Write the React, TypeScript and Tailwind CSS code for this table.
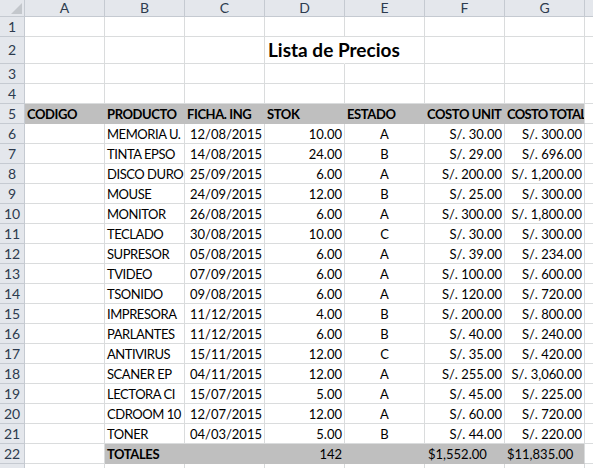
const COLS = ["A", "B", "C", "D", "E", "F", "G", ""];

const rows: [string, string, string, string, string, string][] = [
  ["MEMORIA U.", "12/08/2015", "10.00", "A", "S/. 30.00", "S/. 300.00"],
  ["TINTA EPSO", "14/08/2015", "24.00", "B", "S/. 29.00", "S/. 696.00"],
  ["DISCO DURO", "25/09/2015", "6.00", "A", "S/. 200.00", "S/. 1,200.00"],
  ["MOUSE", "24/09/2015", "12.00", "B", "S/. 25.00", "S/. 300.00"],
  ["MONITOR", "26/08/2015", "6.00", "A", "S/. 300.00", "S/. 1,800.00"],
  ["TECLADO", "30/08/2015", "10.00", "C", "S/. 30.00", "S/. 300.00"],
  ["SUPRESOR", "05/08/2015", "6.00", "A", "S/. 39.00", "S/. 234.00"],
  ["TVIDEO", "07/09/2015", "6.00", "A", "S/. 100.00", "S/. 600.00"],
  ["TSONIDO", "09/08/2015", "6.00", "A", "S/. 120.00", "S/. 720.00"],
  ["IMPRESORA", "11/12/2015", "4.00", "B", "S/. 200.00", "S/. 800.00"],
  ["PARLANTES", "11/12/2015", "6.00", "B", "S/. 40.00", "S/. 240.00"],
  ["ANTIVIRUS", "15/11/2015", "12.00", "C", "S/. 35.00", "S/. 420.00"],
  ["SCANER EP", "04/11/2015", "12.00", "A", "S/. 255.00", "S/. 3,060.00"],
  ["LECTORA CI", "15/07/2015", "5.00", "A", "S/. 45.00", "S/. 225.00"],
  ["CDROOM 10", "12/07/2015", "12.00", "A", "S/. 60.00", "S/. 720.00"],
  ["TONER", "04/03/2015", "5.00", "B", "S/. 44.00", "S/. 220.00"],
];

const grid = "grid grid-cols-[25px_repeat(8,80px)]";
const cell = "flex items-end pb-[2px] px-[2px] whitespace-nowrap overflow-hidden border-r border-b border-[#dadcdd]";
const gray = "flex items-end pb-[2px] px-[2px] whitespace-nowrap overflow-hidden border-r border-b border-[#bfbfbf] bg-[#bfbfbf] font-bold tracking-[-0.4px]";

function RowHead({ n }: { n: number | string }) {
  return (
    <div className="flex items-center justify-center border-r border-b border-[#c5cad1] bg-[#e4e7ec] text-[14px] text-[#2d3b4e]">
      {n}
    </div>
  );
}

function Blank({ n, h = "h-5" }: { n: number | string; h?: string }) {
  return (
    <div className={`${grid} ${h}`}>
      <RowHead n={n} />
      {COLS.map((c, i) => (
        <div key={i} className={cell} />
      ))}
    </div>
  );
}

export default function App() {
  return (
    <div
      className="w-[593px] h-[468px] overflow-hidden bg-white text-[13px] leading-none text-black"
      style={{ fontFamily: "Lato, 'Liberation Sans', sans-serif" }}
    >
      {/* column headers */}
      <div className={`${grid} h-[17px]`}>
        <div className="relative border-r border-b border-[#c5cad1] bg-[#e4e7ec]">
          <svg className="absolute right-[2px] bottom-[2px]" width="11" height="11" viewBox="0 0 11 11">
            <polygon points="11,0 11,11 0,11" fill="#c3c7cc" />
          </svg>
        </div>
        {COLS.map((c, i) => (
          <div
            key={i}
            className="flex items-center justify-center border-r border-b border-[#c5cad1] bg-[#e4e7ec] text-[14px] text-[#2d3b4e]"
          >
            {c}
          </div>
        ))}
      </div>

      <Blank n={1} />

      {/* title row */}
      <div className={`${grid} h-[27px]`}>
        <RowHead n={2} />
        <div className={cell} />
        <div className={cell} />
        <div className={cell} />
        <div className="relative flex items-end pb-[4px] px-[3px] whitespace-nowrap border-b border-[#dadcdd] border-r border-r-white">
          <span className="text-[19px] font-bold">Lista de Precios</span>
        </div>
        <div className={cell} />
        <div className={cell} />
        <div className={cell} />
        <div className={cell} />
      </div>

      <Blank n={3} />
      <Blank n={4} />

      {/* column titles */}
      <div className={`${grid} h-5`}>
        <RowHead n={5} />
        <div className={gray}>CODIGO</div>
        <div className={gray}>PRODUCTO</div>
        <div className={gray}>FICHA. ING</div>
        <div className={gray}>STOK</div>
        <div className={gray}>ESTADO</div>
        <div className={gray}>COSTO UNIT</div>
        <div className={`${gray} border-r-[#dadcdd] px-[1px] tracking-[-0.7px]`}>COSTO TOTAL</div>
        <div className={cell} />
      </div>

      {rows.map((r, i) => (
        <div key={i} className={`${grid} h-5`}>
          <RowHead n={i + 6} />
          <div className={cell} />
          <div className={`${cell} tracking-[-0.45px]`}>{r[0]}</div>
          <div className={`${cell} justify-end`}>{r[1]}</div>
          <div className={`${cell} justify-end`}>{r[2]}</div>
          <div className={`${cell} justify-center`}>{r[3]}</div>
          <div className={`${cell} justify-end`}>{r[4]}</div>
          <div className={`${cell} justify-end`}>{r[5]}</div>
          <div className={cell} />
        </div>
      ))}

      {/* totals */}
      <div className={`${grid} h-5`}>
        <RowHead n={22} />
        <div className={cell} />
        <div className={gray}>TOTALES</div>
        <div className={gray} />
        <div className={`${gray} justify-end font-normal tracking-normal`}>142</div>
        <div className={gray} />
        <div className={`${gray} font-normal tracking-normal pl-[3px]`}>$1,552.00</div>
        <div className={`${gray} font-normal tracking-normal border-r-[#dadcdd]`}>$11,835.00</div>
        <div className={cell} />
      </div>

      <Blank n="" />
    </div>
  );
}
